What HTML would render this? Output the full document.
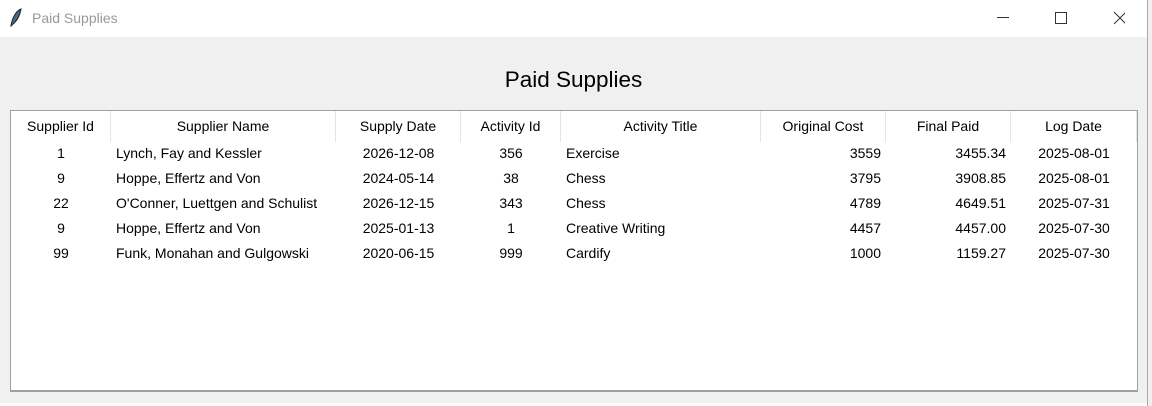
<!DOCTYPE html>
<html><head><style>
*{margin:0;padding:0;box-sizing:border-box}
body{width:1152px;height:406px;background:#fff;font-family:"Liberation Sans",sans-serif;position:relative;overflow:hidden}
.tb{position:absolute;left:0;top:0;width:1147px;height:37px;background:#fff}
.tb .t{position:absolute;left:32px;top:10px;font-size:14px;color:#999}
.win{position:absolute;left:0;top:37px;width:1147px;height:366px;background:#f0f0f0}
.edge{position:absolute;left:1147px;top:0;width:5px;height:406px;background:#f4eeee;border-left:1px solid #aaa}
h1{position:absolute;left:0;width:1147px;top:67px;text-align:center;font-weight:normal;font-size:22.5px;color:#000}
.tbl{position:absolute;left:10px;top:110px;width:1128px;height:282px;background:#fff;border:1px solid #a0a0a0;border-bottom:2px solid #a0a0a0}
.c{position:absolute;font-size:14px;color:#000;white-space:nowrap}
.hd{position:absolute;top:0;height:31px;border-right:1px solid #e5e5e5;font-size:14px;text-align:center;line-height:30px}
</style></head><body>
<div class="tb">
<svg style="position:absolute;left:9px;top:8px" width="14" height="20" viewBox="0 0 14 20"><path d="M2 18 C3 10 7 3 12 1 C11 7 8 13 3 17 Z" fill="#4a6a8a" stroke="#222" stroke-width="1"/></svg>
<div class="t">Paid Supplies</div>
<svg style="position:absolute;left:995px;top:10px" width="130" height="16"><line x1="2" y1="7.5" x2="14" y2="7.5" stroke="#333"/><rect x="60.5" y="2.5" width="11" height="11" fill="none" stroke="#333"/><path d="M119 2 L131 14 M131 2 L119 14" stroke="#333"/></svg>
</div>
<div class="win"></div>
<div class="edge"></div>
<h1>Paid Supplies</h1>
<div class="tbl" id="t"></div>
<script>
var cols=[[0,100,'Supplier Id','c'],[100,225,'Supplier Name','l'],[325,125,'Supply Date','c'],[450,100,'Activity Id','c'],[550,200,'Activity Title','l'],[750,125,'Original Cost','r'],[875,125,'Final Paid','r'],[1000,126,'Log Date','c']];
var rows=[["1","Lynch, Fay and Kessler","2026-12-08","356","Exercise","3559","3455.34","2025-08-01"],
["9","Hoppe, Effertz and Von","2024-05-14","38","Chess","3795","3908.85","2025-08-01"],
["22","O'Conner, Luettgen and Schulist","2026-12-15","343","Chess","4789","4649.51","2025-07-31"],
["9","Hoppe, Effertz and Von","2025-01-13","1","Creative Writing","4457","4457.00","2025-07-30"],
["99","Funk, Monahan and Gulgowski","2020-06-15","999","Cardify","1000","1159.27","2025-07-30"]];
var h='';
cols.forEach(function(c){h+='<div class="hd" style="left:'+c[0]+'px;width:'+c[1]+'px">'+c[2]+'</div>';});
rows.forEach(function(r,i){var y=34+i*25;r.forEach(function(v,j){var c=cols[j];var st='top:'+y+'px;';
if(c[3]=='l')st+='left:'+(c[0]+5)+'px;';else if(c[3]=='r')st+='left:'+c[0]+'px;width:'+(c[1]-5)+'px;text-align:right;';else st+='left:'+c[0]+'px;width:'+c[1]+'px;text-align:center;';
h+='<div class="c" style="'+st+'">'+v+'</div>';});});
document.getElementById('t').innerHTML=h;
</script>
</body></html>
